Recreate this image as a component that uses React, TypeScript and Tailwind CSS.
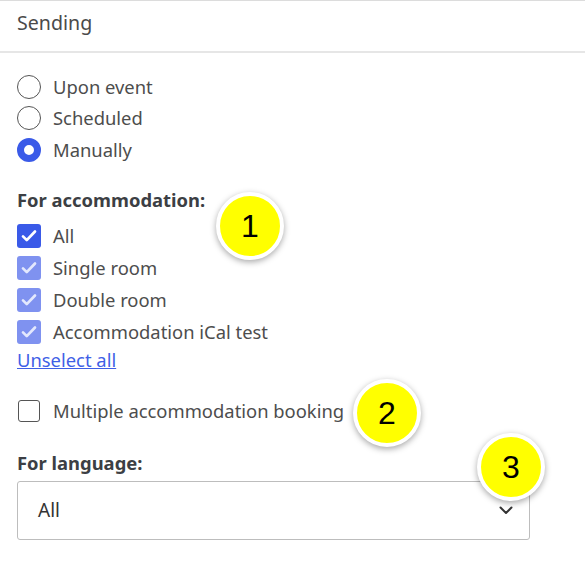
import React from "react";

const font = { fontFamily: '"Noto Sans", "Open Sans", sans-serif' };

function Radio({ label, checked }: { label: string; checked?: boolean }) {
  return (
    <label className="flex h-[31.5px] items-center gap-3">
      {checked ? (
        <span className="h-6 w-6 rounded-full border-[7px] border-[#3a5ae8] bg-white" />
      ) : (
        <span className="h-6 w-6 rounded-full border-[1.6px] border-[#555] bg-white" />
      )}
      <span className="text-[18.4px] text-[#4d4d4d]">{label}</span>
    </label>
  );
}

function Check({ label, state }: { label: string; state: "on" | "dim" | "off" }) {
  return (
    <label className="flex h-8 items-center gap-3">
      {state === "off" ? (
        <span className="mx-px h-[22px] w-[22px] rounded-[3px] border-[1.5px] border-[#555] bg-white" />
      ) : (
        <span
          className={
            state === "on"
              ? "flex h-6 w-6 items-center justify-center rounded-[3px] bg-[#3a5ae8]"
              : "flex h-6 w-6 items-center justify-center rounded-[3px] bg-[#7f92f0]"
          }
        >
          <svg viewBox="0 0 24 24" className="h-[18px] w-[18px]" fill="none">
            <path
              d="M4 12.5l5 5L20 6"
              stroke={state === "on" ? "#ffffff" : "#e3e8fd"}
              strokeWidth="3.6"
              strokeLinecap="round"
              strokeLinejoin="round"
            />
          </svg>
        </span>
      )}
      <span className="text-[18.4px] text-[#4d4d4d]">{label}</span>
    </label>
  );
}

function Badge({ n, className }: { n: number; className: string }) {
  return (
    <div
      className={
        "absolute flex h-[68px] w-[68px] items-center justify-center rounded-full border-4 border-white bg-[#ffff00] shadow-[0_2px_6px_rgba(0,0,0,0.35)] " +
        className
      }
    >
      <span className="text-[32px] leading-none text-black" style={{ fontFamily: '"Liberation Sans", Arial, sans-serif' }}>
        {n}
      </span>
    </div>
  );
}

export default function App() {
  return (
    <div className="relative h-[565px] w-[585px] overflow-hidden bg-white" style={font}>
      <div className="flex h-[53px] items-start border-t border-b-2 border-t-[#dcdcdc] border-b-[#e6e6e6] px-[17px] pt-[8px]">
        <span className="text-[19.6px] leading-7 text-[#4a4a4a]">Sending</span>
      </div>

      <div className="px-[17px] pt-[18px]">
        <div className="flex flex-col">
          <Radio label="Upon event" />
          <Radio label="Scheduled" />
          <Radio label="Manually" checked />
        </div>

        <div className="mt-[22px] text-[18.4px] font-bold leading-6 text-[#3c3f44]">For accommodation:</div>
        <div className="mt-2 flex flex-col">
          <Check label="All" state="on" />
          <Check label="Single room" state="dim" />
          <Check label="Double room" state="dim" />
          <Check label="Accommodation iCal test" state="dim" />
        </div>
        <a href="#" className="block text-[18.4px] leading-6 text-[#3f5fe6] underline">
          Unselect all
        </a>

        <div className="mt-[23px]">
          <Check label="Multiple accommodation booking" state="off" />
        </div>

        <div className="mt-6 text-[18.4px] font-bold leading-6 text-[#3c3f44]">For language:</div>
        <div className="mt-1.5 flex h-[59px] w-[513px] items-center justify-between rounded-[3px] border border-[#bdbdbd] pl-5 pr-4">
          <span className="text-[19px] text-[#333]">All</span>
          <svg viewBox="0 0 14 9" className="h-[9px] w-[14px]" fill="none">
            <path d="M1.5 1.5L7 7l5.5-5.5" stroke="#333" strokeWidth="2" strokeLinecap="round" strokeLinejoin="round" />
          </svg>
        </div>
      </div>

      <Badge n={1} className="left-[216px] top-[192px]" />
      <Badge n={2} className="left-[353px] top-[379px]" />
      <Badge n={3} className="left-[477px] top-[433px]" />
    </div>
  );
}
